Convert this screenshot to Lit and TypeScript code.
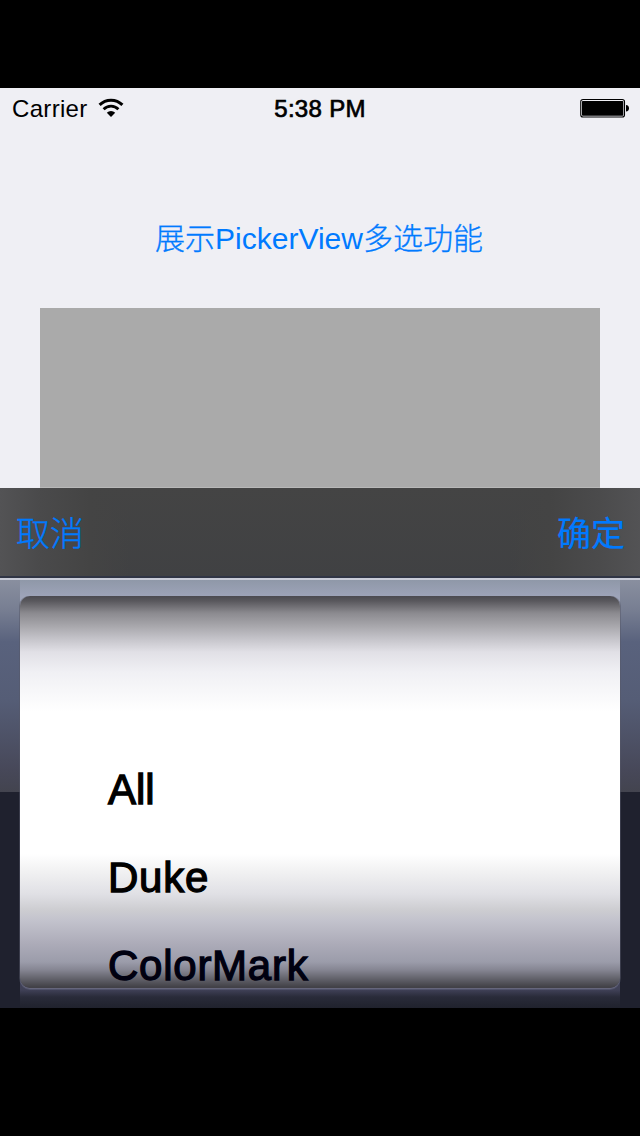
import { LitElement, html, css } from "lit";
import { customElement, property } from "lit/decorators.js";

const PICKER_ROWS = ["All", "Duke", "ColorMark"];

@customElement("status-bar")
class StatusBar extends LitElement {
  static styles = css`
    :host {
      display: grid;
      grid-template-columns: 1fr auto 1fr;
      align-items: center;
      box-sizing: border-box;
      height: 40px;
      padding: 0 10px 0 12px;
      color: #000;
      font-size: 24px;
      line-height: 40px;
    }
    .carrier { display: flex; align-items: center; gap: 10px; letter-spacing: 0.32px; }
    .label { padding-top: 1px; height: 39px; }
    .time { padding: 1px 2px 0 0; height: 39px; letter-spacing: 0.3px; -webkit-text-stroke: 0.7px #000; }
    .wifi { display: block; }
    .battery { display: block; justify-self: end; }
  `;
  render() {
    return html`
      <div class="carrier">
        <span class="label">Carrier</span>
        <svg class="wifi" width="26" height="20" viewBox="0 0 26 20">
          <path d="M1.600 6.900a16 16 0 0 1 22.800 0" fill="none" stroke="#000" stroke-width="3"/>
          <path d="M5.600 11.300a10.400 10.400 0 0 1 14.800 0" fill="none" stroke="#000" stroke-width="2.800"/>
          <path d="M13 19 8.800 14.700a6 6 0 0 1 8.400 0Z"/>
        </svg>
      </div>
      <span class="time">5:38 PM</span>
      <svg class="battery" width="50" height="20" viewBox="0 0 50 20">
        <rect x=".75" y="1.500" width="43.750" height="17.500" rx="2.300" fill="none" stroke="#000" stroke-width="1.100"/>
        <rect x="2" y="3" width="41.300" height="14.700" rx=".8"/>
        <path d="M46 7c2 .2 3 1.400 3 3.300s-1 3.100-3 3.300Z"/>
      </svg>
    `;
  }
}

@customElement("picker-wheel")
class PickerWheel extends LitElement {
  @property({ attribute: false }) rows: string[] = [];
  static styles = css`
    :host {
      display: block;
      box-sizing: border-box;
      height: 428px;
      padding: 16px 20px 0;
      background:
        linear-gradient(#8f98a8 0, #9da3b8 16px, #a0a4b8 30px, #4b4b60 360px, #3f4056 410px, #292b39 417px, #20222d 428px) 20px 0 / 600px 428px no-repeat,
        linear-gradient(#898f9f 0, #777e92 30px, #59627d 62px, #555d76 120px, #474859 190px, #43444f 212px, #1f212e 212px);
    }
    .wheel {
      display: flex;
      flex-direction: column;
      box-sizing: border-box;
      height: 392px;
      padding-top: 150px;
      overflow: hidden;
      border-radius: 10px;
      background: linear-gradient(#4b4a50 0, #59585d 5px, #8b8a8f 17px, #aaa9ae 31px, #c5c4ca 43px, #e1e0e6 56px, #f0f0f4 76px, #fff 116px, #fff 258px, #f0f0f1 277px, #e0e0e5 298px, #cdcdd1 314px, #c3c3cd 324px, #adacb9 347px, #9b9caa 366px, #858592 374px, #65656e 382px, #424147 391px);
      box-shadow: 0 1px 0 0 #66667c, 0 2px 0 0 #50526a, 1px 0 0 0 #55576880, -1px 0 0 0 #55576880;
    }
    .row {
      flex: none;
      height: 88px;
      padding-left: 88px;
      font-size: 42px;
      line-height: 88px;
      letter-spacing: 0.75px;
      color: #000;
      -webkit-text-stroke: 1.3px currentColor;
    }
    .row:first-child { letter-spacing: 0; }
    .row:last-child { color: #000010; }
  `;
  render() {
    return html`<div class="wheel">${this.rows.map((r) => html`<div class="row">${r}</div>`)}</div>`;
  }
}

@customElement("app-root")
class AppRoot extends LitElement {
  static styles = css`
    :host {
      display: block;
      box-sizing: border-box;
      width: 640px;
      height: 1136px;
      padding: 88px 0 128px;
      overflow: hidden;
      background: #000;
      font-family: "Liberation Sans", "Noto Sans CJK SC", sans-serif;
    }
    .screen { display: flex; flex-direction: column; height: 920px; background: #efeff4; }
    .title {
      margin-top: 84px;
      height: 48px;
      padding-right: 2px;
      line-height: 48px;
      text-align: center;
      font-size: 30px;
      color: #007aff;
    }
    .cjk { font-family: "Noto Sans CJK SC", sans-serif; font-weight: 300; -webkit-text-stroke: 0.35px currentColor; }
    .panel { height: 179px; margin: 48px 40px 0; background: #aaa; border-bottom: 1px solid #b8b8b8; }
    .toolbar {
      display: flex;
      justify-content: space-between;
      box-sizing: border-box;
      height: 92px;
      padding: 0 15px 0 16px;
      line-height: 87px;
      font-size: 34px;
      color: #007aff;
      border-bottom: 2px solid #c9ccd8;
      background:
        linear-gradient(transparent 88px, #303545 88px),
        linear-gradient(90deg, #535355 0, #4a4a4b 40px, #444 90px, transparent 130px, transparent 510px, #444 550px, #4b4b4c 600px, #535355 640px),
        linear-gradient(#444, #404143);
    }
    .strong { font-weight: 400; -webkit-text-stroke-width: 0.2px; }
  `;
  render() {
    return html`
      <div class="screen">
        <status-bar></status-bar>
        <div class="title"><span class="cjk">展示</span>PickerView<span class="cjk">多选功能</span></div>
        <div class="panel"></div>
        <div class="toolbar">
          <span class="cjk">取消</span>
          <span class="cjk strong">确定</span>
        </div>
        <picker-wheel .rows=${PICKER_ROWS}></picker-wheel>
      </div>
    `;
  }
}
